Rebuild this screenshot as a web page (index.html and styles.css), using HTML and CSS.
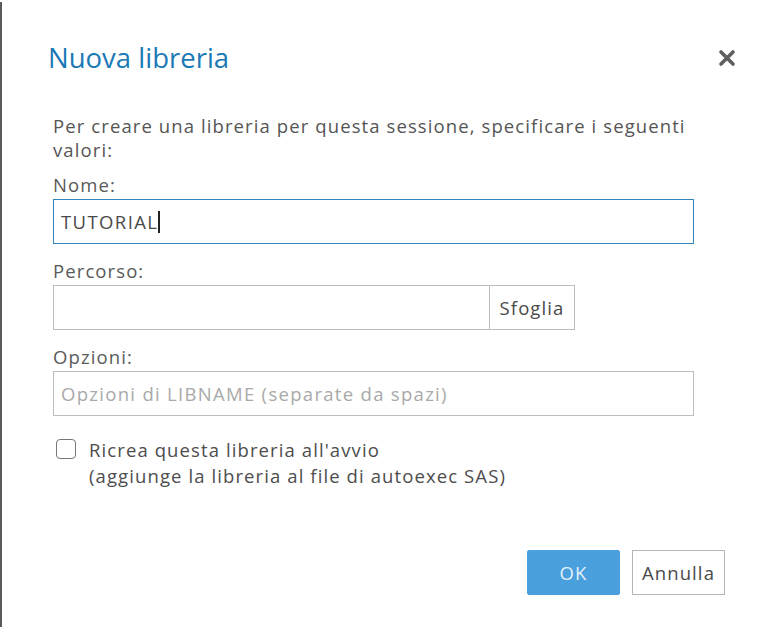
FILE: index.html
```html
<!DOCTYPE html>
<html lang="it">
<head>
<meta charset="utf-8">
<title>Nuova libreria</title>
<link rel="stylesheet" href="styles.css">
</head>
<body>
<div class="dialog">
  <div class="header">
    <h1 class="title">Nuova libreria</h1>
    <button class="close" aria-label="Chiudi">
      <svg width="18" height="18" viewBox="0 0 18 18"><path d="M3 3L15 15M15 3L3 15" stroke="#5f5f5f" stroke-width="3.6" stroke-linecap="round"/></svg>
    </button>
  </div>
  <div class="body">
    <p class="intro">Per creare una libreria per questa sessione, specificare i seguenti valori:</p>
    <div class="field">
      <label class="label">Nome:</label>
      <div class="input focused"><span class="value">TUTORIAL</span><span class="caret"></span></div>
    </div>
    <div class="field">
      <label class="label">Percorso:</label>
      <div class="row">
        <div class="input path"></div>
        <button class="browse">Sfoglia</button>
      </div>
    </div>
    <div class="field">
      <label class="label">Opzioni:</label>
      <div class="input"><span class="placeholder">Opzioni di LIBNAME (separate da spazi)</span></div>
    </div>
    <div class="check">
      <span class="box"></span>
      <div class="check-text">Ricrea questa libreria all'avvio<br>(aggiunge la libreria al file di autoexec SAS)</div>
    </div>
  </div>
  <div class="footer">
    <button class="btn primary">OK</button>
    <button class="btn">Annulla</button>
  </div>
</div>
</body>
</html>
```
FILE: styles.css
```css
* { box-sizing: border-box; }
html, body { margin: 0; padding: 0; background: #fff; }
body {
  font-family: "Open Sans", Lato, "Liberation Sans", sans-serif;
  color: #4d4d4d;
  width: 772px;
  height: 627px;
  overflow: hidden;
}
.dialog {
  height: 625px;
  margin-top: 2px;
  border-left: 2px solid #5a5a5a;
  display: flex;
  flex-direction: column;
}
.header {
  display: flex;
  align-items: center;
  justify-content: space-between;
  padding: 38px 36px 0 46px;
}
.title {
  margin: 0;
  font-weight: 400;
  font-size: 27.5px;
  line-height: 36px;
  color: #1b79b5;
}
.close {
  border: 0;
  background: none;
  padding: 0;
  width: 18px;
  height: 18px;
  display: flex;
}
.body {
  padding: 0 78px 0 51px;
  font-size: 18.5px;
  letter-spacing: 1.1px;
  line-height: 24px;
}
.intro { margin: 38px 0 0; color: #555; }
.field { margin-top: 11px; }
.field + .field { margin-top: 15px; }
.label { display: block; color: #5a5a5a; line-height: 24px; }
.input {
  height: 45px;
  border: 1px solid #bdbdbd;
  display: flex;
  align-items: center;
  padding: 0 7px;
  margin-top: 2px;
}
.input.focused { border: 1px solid #3384bd; }
.value { color: #4a4a4a; letter-spacing: 1.4px; }
.caret { width: 2px; height: 22px; background: #222; }
.placeholder { color: #a9a9a9; letter-spacing: 1.3px; }
.row { display: flex; margin-top: 2px; }
.row .input { margin-top: 0; flex: 0 0 437px; }
.browse {
  height: 45px;
  border: 1px solid #bdbdbd;
  border-left: 0;
  background: #fff;
  font: inherit;
  letter-spacing: inherit;
  color: #4a4a4a;
  padding: 0;
  width: 85px;
}
.check {
  display: flex;
  gap: 13px;
  margin-top: 21px;
  align-items: flex-start;
}
.box {
  width: 20px;
  height: 20px;
  border: 1.5px solid #777;
  border-radius: 4px;
  margin: 2px 0 0 3px;
  flex: none;
}
.check-text { line-height: 26px; color: #4d4d4d; }
.footer {
  display: flex;
  justify-content: flex-end;
  gap: 12px;
  padding: 0 47px 0 0;
  margin-top: 61px;
}
.btn {
  width: 93px;
  height: 45px;
  font: inherit;
  font-size: 18.5px;
  letter-spacing: 1.1px;
  background: #fff;
  border: 1px solid #b5b5b5;
  color: #4a4a4a;
  padding: 0;
}
.btn.primary {
  background: #4a9fdd;
  border-color: #4a9fdd;
  color: #e3f1fb;
  border-radius: 2px;
}
```
